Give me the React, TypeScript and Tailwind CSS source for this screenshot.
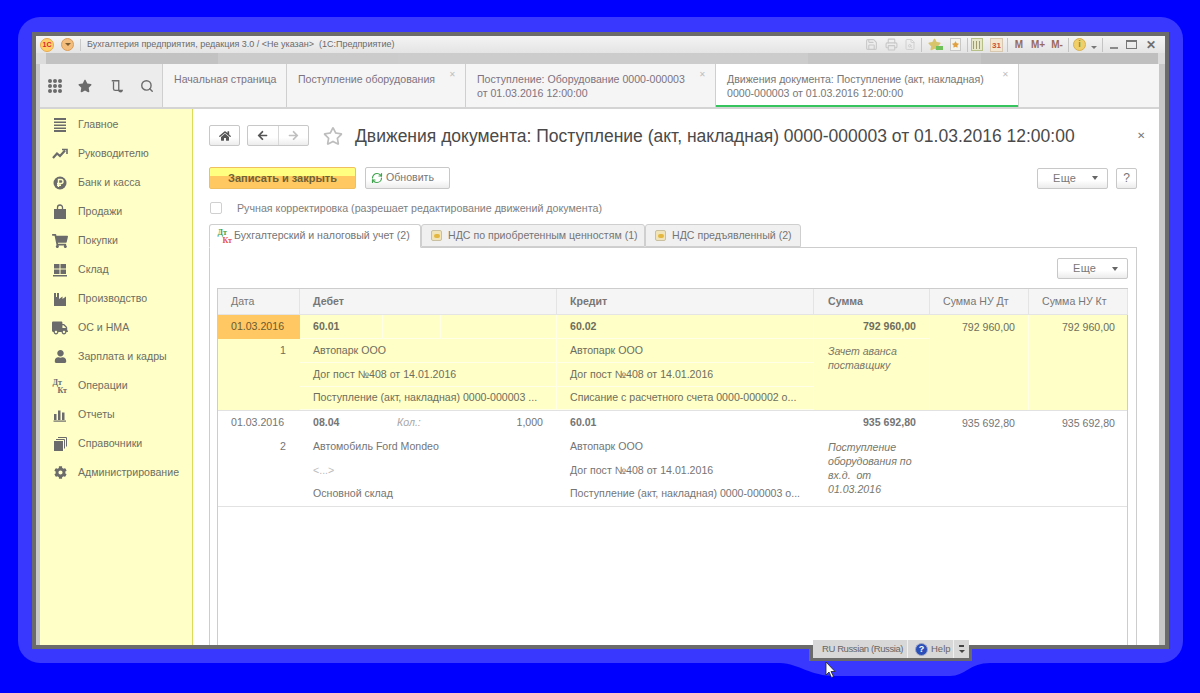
import React from "react";
import { FaShoppingCart, FaTruck, FaUser, FaCog, FaHome, FaStar, FaRegStar, FaArrowLeft, FaArrowRight } from "react-icons/fa";
import { Search, RefreshCw, Save, Printer, FileSearch } from "lucide-react";

const sideIcon = "w-4 h-4 text-[#6b6b6b]";

const IconLines = () => (
  <svg viewBox="0 0 16 16" className={sideIcon} fill="currentColor">
    <rect x="2" y="1" width="12" height="2" /><rect x="2" y="4.5" width="12" height="1.5" /><rect x="2" y="7.5" width="12" height="1.5" /><rect x="2" y="10.5" width="12" height="1.5" /><rect x="2" y="13" width="12" height="2" />
  </svg>
);
const IconTrend = () => (
  <svg viewBox="0 0 16 16" className={sideIcon} fill="none" stroke="currentColor" strokeWidth="2.2">
    <path d="M1 12 L5 7.5 L8 10 L13 4.5" /><path d="M10 3.5 H15 V8" strokeWidth="1.6" />
  </svg>
);
const IconRuble = () => (
  <svg viewBox="0 0 16 16" className={sideIcon}>
    <circle cx="8" cy="8" r="6.5" fill="currentColor" />
    <path d="M6.5 12 V4.5 H9 A2 2 0 0 1 9 8.5 H5 M5 10.3 H9" fill="none" stroke="#ffffc8" strokeWidth="1.4" />
  </svg>
);
const IconBag = () => (
  <svg viewBox="0 0 16 16" className={sideIcon} fill="currentColor">
    <path d="M2 5 H14 V15 H2 Z" />
    <path d="M5.5 6 V3.5 A2.5 2.5 0 0 1 10.5 3.5 V6" fill="none" stroke="currentColor" strokeWidth="1.3" />
  </svg>
);
const IconStock = () => (
  <svg viewBox="0 0 16 16" className={sideIcon} fill="currentColor">
    <rect x="2" y="2" width="5.5" height="4.5" /><rect x="8.5" y="2" width="5.5" height="4.5" /><rect x="2" y="7.5" width="5.5" height="4.5" /><rect x="8.5" y="7.5" width="5.5" height="4.5" /><rect x="1" y="13" width="14" height="1.5" />
  </svg>
);
const IconFactory = () => (
  <svg viewBox="0 0 16 16" className={sideIcon} fill="currentColor">
    <path d="M2 2 H4 V6 H5 V2 H7 V8 L10.5 5.5 V8 L14 5.5 V15 H2 Z" />
  </svg>
);
const IconDtKt = ({ dt = "#6b6b6b", kt = "#6b6b6b" }: { dt?: string; kt?: string }) => (
  <svg viewBox="0 0 16 16" className="w-4 h-4">
    <text x="0.5" y="7" fontSize="8" fontWeight="700" fontFamily="'Liberation Serif', serif" fill={dt}>Дт</text>
    <text x="5.5" y="15" fontSize="8" fontWeight="700" fontFamily="'Liberation Serif', serif" fill={kt}>Кт</text>
  </svg>
);
const IconBars = () => (
  <svg viewBox="0 0 16 16" className={sideIcon} fill="currentColor">
    <rect x="2" y="7" width="2.5" height="6" /><rect x="6" y="3.5" width="2.5" height="9.5" /><rect x="10" y="5.5" width="2.5" height="7.5" /><rect x="1.5" y="13.5" width="12.5" height="1.2" />
  </svg>
);
const IconBooks = () => (
  <svg viewBox="0 0 16 16" className={sideIcon} fill="currentColor">
    <rect x="2" y="5" width="9" height="10" />
    <path d="M4 3.5 H12.5 V12.5 M6 1.5 H14.5 V10.5" fill="none" stroke="currentColor" strokeWidth="1" />
  </svg>
);

const MENU: { label: string; icon: React.ReactNode }[] = [
  { label: "Главное", icon: <IconLines /> },
  { label: "Руководителю", icon: <IconTrend /> },
  { label: "Банк и касса", icon: <IconRuble /> },
  { label: "Продажи", icon: <IconBag /> },
  { label: "Покупки", icon: <FaShoppingCart className={sideIcon} /> },
  { label: "Склад", icon: <IconStock /> },
  { label: "Производство", icon: <IconFactory /> },
  { label: "ОС и НМА", icon: <FaTruck className={sideIcon} /> },
  { label: "Зарплата и кадры", icon: <FaUser className="w-[13px] h-[13px] mx-[1.5px] text-[#6b6b6b]" /> },
  { label: "Операции", icon: <IconDtKt /> },
  { label: "Отчеты", icon: <IconBars /> },
  { label: "Справочники", icon: <IconBooks /> },
  { label: "Администрирование", icon: <FaCog className="w-[13px] h-[13px] mx-[1.5px] text-[#6b6b6b]" /> },
];

const Sep = ({ className = "" }: { className?: string }) => <span className={`w-px h-[14px] bg-[#c4c4c4] ${className}`} />;

const TitleBar = () => (
  <div className="h-[17px] flex items-center bg-gradient-to-b from-[#f4f4f4] to-[#e4e4e4] pl-[4px] pr-[9px]">
    <span className="w-[14px] h-[14px] rounded-full bg-[#ffcf6a] border border-[#e8a94a] flex items-center justify-center text-[7px] leading-none font-bold text-[#d8262c]">1С</span>
    <span className="w-[13px] h-[13px] rounded-full bg-[#f2bd7d] border border-[#dc9c58] ml-[7px] flex items-center justify-center">
      <span className="w-0 h-0 border-x-[3px] border-x-transparent border-t-[3px] border-t-[#7a5a30]" />
    </span>
    <span className="w-px h-[12px] bg-[#c9c9c9] ml-[6px]" />
    <span className="ml-[6px] text-[9px] leading-none whitespace-pre text-[#6a6a6a]">Бухгалтерия предприятия, редакция 3.0 / &lt;Не указан&gt;  (1С:Предприятие)</span>
    <div className="ml-auto flex items-center text-[#9a6a5a]">
      <Save className="w-[13px] h-[13px] text-[#c8c8c8]" strokeWidth={2} />
      <Printer className="w-[13px] h-[13px] ml-[7px] text-[#c8c8c8]" strokeWidth={2} />
      <FileSearch className="w-[12px] h-[13px] ml-[6px] text-[#d0d0d0]" strokeWidth={2} />
      <Sep className="ml-[5px]" />
      <FaStar className="w-[13px] h-[13px] text-[#d8c46a] ml-[6px]" />
      <span className="w-[7px] h-[4px] bg-[#6fbf5a] -ml-[5px] mt-[6px]" />
      <span className="ml-[7px] w-[11px] h-[13px] bg-[#f4f4ec] border border-[#c8c8c8] flex items-center justify-center">
        <FaStar className="w-[7px] h-[7px] text-[#e0a040]" />
      </span>
      <Sep className="ml-[6px]" />
      <span className="w-[12px] h-[13px] bg-[#e6e6c8] border border-[#b8c08a] ml-[3px] flex flex-col items-center pt-[2px]">
        <span className="w-[8px] h-[8px] bg-[repeating-linear-gradient(90deg,#a09a70_0_1px,transparent_1px_3px)]" />
      </span>
      <span className="w-[13px] h-[14px] bg-[#f3e6d0] border border-[#d8c8b0] ml-[7px] text-[8px] leading-[13px] text-center font-bold text-[#c8503a]">31</span>
      <Sep className="ml-[4px]" />
      <span className="text-[10px] font-bold w-[10px] ml-[6px] text-center">M</span>
      <span className="text-[10px] font-bold w-[14px] ml-[7px] text-center">M+</span>
      <span className="text-[10px] font-bold w-[14px] ml-[5px] text-center">M-</span>
      <Sep className="ml-[4px]" />
      <span className="w-[13px] h-[13px] ml-[4px] rounded-full bg-[#efcf6a] border border-[#d8b050] text-[9px] leading-[11px] text-center font-bold text-[#8c8c40]">i</span>
      <span className="w-0 h-0 ml-[5px] mt-[5px] border-x-[3px] border-x-transparent border-t-[3px] border-t-[#777]" />
      <Sep className="ml-[5px]" />
      <span className="w-[8px] h-[2px] bg-[#8a8a8a] ml-[7px] mt-[6px]" />
      <span className="w-[11px] h-[9px] border border-[#777] border-t-2 ml-[8px]" />
      <span className="w-[10px] text-[12px] font-bold text-[#6e6e6e] leading-none ml-[9px]">✕</span>
    </div>
  </div>
);

const GrayStrip = () => (
  <div className="h-[11px] flex bg-[#dcdcdc]">
    <div className="w-[172px] ml-[10px] bg-[#c2c2c2]" />
    <div className="w-[180px] bg-[#cbcbcb]" />
    <div className="w-[410px] bg-[#cccccc]" />
    <div className="w-[173px] bg-[#c6c6c6]" />
    <div className="w-[177px] bg-[#bfbfbf]" />
    <div className="flex-1" />
  </div>
);

const PageTab = ({ lines, width, close, active }: { lines: string[]; width: string; close?: boolean; active?: boolean }) => (
  <div className={`relative h-full border-r border-[#cfcfcf] pt-[8px] pl-[11px] text-[10.6px] leading-[14px] ${width} ${active ? "bg-white text-[#777]" : "bg-[#f5f5f5] text-[#7d7380]"}`}>
    {lines.map((l) => (
      <div key={l} className="whitespace-nowrap">{l}</div>
    ))}
    {close && <span className="absolute right-[9px] top-[7px] text-[8px] leading-none text-[#c0c0c0]">✕</span>}
    {active && <span className="absolute left-0 right-0 bottom-0 h-[2px] bg-[#36c45e]" />}
  </div>
);

const TabsRow = () => (
  <div className="h-[45px] flex border-b-2 border-[#d4d4d4]">
    <div className="w-[123px] bg-[#ececec] border-r border-[#cfcfcf] flex items-center pl-[8px] text-[#6b6b6b]">
      <span className="grid grid-cols-[repeat(3,4px)] gap-[1px] w-[14px]">
        {Array.from({ length: 9 }).map((_, i) => (
          <span key={i} className="w-[4px] h-[4px] rounded-full bg-[#6b6b6b]" />
        ))}
      </span>
      <FaStar className="w-[14px] h-[14px] ml-[16px] mt-[1px]" />
      <svg viewBox="0 0 16 16" className="w-[14px] h-[14px] ml-[18px]" fill="none" stroke="currentColor" strokeWidth="1.5">
        <path d="M2 2 H10 V12 A2 2 0 0 0 14 13 H6 A2 2 0 0 1 4 11 V3" />
      </svg>
      <Search className="w-[14px] h-[14px] ml-[16px]" strokeWidth={2.4} />
    </div>
    <PageTab lines={["Начальная страница"]} width="w-[124px]" />
    <PageTab lines={["Поступление оборудования"]} width="w-[179px]" close />
    <PageTab lines={["Поступление: Оборудование 0000-000003", "от 01.03.2016 12:00:00"]} width="w-[250px]" close />
    <PageTab lines={["Движения документа: Поступление (акт, накладная)", "0000-000003 от 01.03.2016 12:00:00"]} width="w-[303px]" close active />
    <div className="flex-1 bg-[#f5f5f5]" />
  </div>
);

const Sidebar = () => (
  <div className="w-[153px] h-full pt-[1px] bg-[#ffffc8] border-r border-[#dcdc5a] shrink-0">
    {MENU.map((m) => (
      <div key={m.label} className="h-[29px] flex items-center pl-[12px]">
        <span className="w-[26px] flex">{m.icon}</span>
        <span className="text-[10.6px] text-[#6e6e62] whitespace-nowrap">{m.label}</span>
      </div>
    ))}
  </div>
);

const btn = "rounded-[2px] border border-[#c8c8c8] bg-gradient-to-b from-white from-60% to-[#ececec] flex items-center";

const Dropdown = ({ className = "" }: { className?: string }) => (
  <div className={`${btn} w-[71px] h-[21px] text-[11px] text-[#777] ${className}`}>
    <span className="ml-[15px] tracking-[0.3px]">Еще</span>
    <span className="ml-auto mr-[9px] w-0 h-0 border-x-[3.5px] border-x-transparent border-t-[4px] border-t-[#666]" />
  </div>
);

type Cell = { text: string; bold?: boolean };

const GRID = "grid grid-cols-[82px_257px_257px_116px_99px_99px] grid-rows-[24px_24px_24px_23px]";

const Record = ({
  date, num, debit, debitExtra, credit, sum, nuDt, nuKt, note, hl,
}: {
  date: string; num: string; debit: Cell[]; debitExtra?: boolean; credit: Cell[]; sum: string; nuDt: string; nuKt: string; note: string[]; hl?: boolean;
}) => {
  const line = hl ? "border-[#ffffe8]" : "border-transparent";
  const base = "flex items-center px-[13px] whitespace-nowrap overflow-hidden";
  const rowLine = `border-b border-r ${line}`;
  return (
    <div className={`${GRID} border-b border-[#e2e2e2] text-[10.6px] ${hl ? "bg-[#ffffc8] text-[#6e6e5c]" : "bg-white text-[#757575]"}`}>
      <div className={`${base} col-start-1 row-start-1 ${hl ? "bg-[#ffc862] text-[#6b5a30]" : ""}`}>{date}</div>
      <div className={`${base} col-start-1 row-start-2 justify-end pr-[14px]`}>{num}</div>
      <div className={`col-start-2 row-start-1 flex items-center ${rowLine}`}>
        <div className={`w-[83px] h-full pl-[13px] flex items-center font-bold border-r ${line}`}>{debit[0].text}</div>
        <div className={`w-[58px] h-full pl-[14px] flex items-center italic text-[#a8a8a8] border-r ${line}`}>{debitExtra ? "Кол.:" : ""}</div>
        <div className="flex-1 flex justify-end pr-[13px]">{debitExtra ? "1,000" : ""}</div>
      </div>
      {debit.slice(1).map((c, i) => (
        <div key={i} className={`${base} col-start-2 ${rowLine} ${c.text === "<...>" ? "text-[#bcbcbc]" : ""}`} style={{ gridRowStart: i + 2 }}>{c.text}</div>
      ))}
      {credit.map((c, i) => (
        <div key={i} className={`${base} col-start-3 ${rowLine} ${c.bold ? "font-bold" : ""}`} style={{ gridRowStart: i + 1 }}>{c.text}</div>
      ))}
      <div className={`${base} col-start-4 row-start-1 justify-end pr-[13px] font-bold ${rowLine}`}>{sum}</div>
      <div className={`col-start-4 row-start-2 row-span-3 pl-[14px] pt-[5px] italic leading-[14px] text-[#77776a] border-r ${line}`}>
        {note.map((n) => (
          <div key={n} className="whitespace-pre">{n}</div>
        ))}
      </div>
      <div className={`col-start-5 row-start-1 row-span-4 pt-[5px] pr-[13px] text-right border-r ${line}`}>{nuDt}</div>
      <div className="col-start-6 row-start-1 row-span-4 pt-[5px] pr-[13px] text-right">{nuKt}</div>
    </div>
  );
};

const HeadCell = ({ children, bold, inset = "pl-[13px]" }: { children: React.ReactNode; bold?: boolean; inset?: string }) => (
  <div className={`flex items-center border-r border-[#e4e4e4] whitespace-nowrap ${inset} ${bold ? "font-bold" : ""}`}>{children}</div>
);

const Movements = () => (
  <div className="w-[911px] ml-[7px] mt-[9px] h-[400px] border-x border-t border-[#cdcdcd]">
    <div className="grid grid-cols-[82px_257px_257px_116px_99px_99px] h-[26px] bg-[#f5f5f5] border-b border-[#e4e4e4] text-[10.6px] text-[#777] -mr-px">
      <HeadCell>Дата</HeadCell>
      <HeadCell bold>Дебет</HeadCell>
      <HeadCell bold>Кредит</HeadCell>
      <HeadCell bold inset="pl-[14px]">Сумма</HeadCell>
      <HeadCell>Сумма НУ Дт</HeadCell>
      <HeadCell>Сумма НУ Кт</HeadCell>
    </div>
    <Record
      hl
      date="01.03.2016"
      num="1"
      debit={[{ text: "60.01" }, { text: "Автопарк ООО" }, { text: "Дог пост №408 от 14.01.2016" }, { text: "Поступление (акт, накладная) 0000-000003 ..." }]}
      credit={[{ text: "60.02", bold: true }, { text: "Автопарк ООО" }, { text: "Дог пост №408 от 14.01.2016" }, { text: "Списание с расчетного счета 0000-000002 о..." }]}
      sum="792 960,00"
      nuDt="792 960,00"
      nuKt="792 960,00"
      note={["Зачет аванса", "поставщику"]}
    />
    <Record
      date="01.03.2016"
      num="2"
      debitExtra
      debit={[{ text: "08.04" }, { text: "Автомобиль Ford Mondeo" }, { text: "<...>" }, { text: "Основной склад" }]}
      credit={[{ text: "60.01", bold: true }, { text: "Автопарк ООО" }, { text: "Дог пост №408 от 14.01.2016" }, { text: "Поступление (акт, накладная) 0000-000003 о..." }]}
      sum="935 692,80"
      nuDt="935 692,80"
      nuKt="935 692,80"
      note={["Поступление", "оборудования по", "вх.д.  от", "01.03.2016"]}
    />
  </div>
);

const DocTab = ({ label, width, active, icon }: { label: string; width: string; active?: boolean; icon: React.ReactNode }) => (
  <div className={`flex items-center rounded-t-[3px] border border-[#cfcfcf] text-[10.6px] whitespace-nowrap text-[#757575] ${width} ${active ? "h-[24px] bg-white border-b-white -mb-px pl-[7px]" : "h-[23px] bg-[#f0f0f0] pl-[9px]"}`}>
    {icon}
    <span className={active ? "ml-[1px]" : "ml-[6px]"}>{label}</span>
  </div>
);

const CoinIcon = () => (
  <span className="w-[11px] h-[11px] rounded-[2px] bg-[#f0e4b8] border border-[#c8c0a0] flex items-center justify-center">
    <span className="w-[6px] h-[4px] rounded-full bg-[#e4b840]" />
  </span>
);

const Content = () => (
  <div className="flex-1 h-full bg-white overflow-hidden pl-[16px] pr-[22px]">
    <div className="h-[21px] mt-[16px] flex items-center">
      <div className={`${btn} w-[31px] h-[21px] justify-center`}>
        <FaHome className="w-[12px] h-[12px] text-[#555]" />
      </div>
      <div className={`${btn} w-[62px] h-[21px] ml-[7px]`}>
        <span className="w-[31px] h-full flex items-center justify-center border-r border-[#d8d8d8]">
          <FaArrowLeft className="w-[11px] h-[11px] text-[#555]" />
        </span>
        <span className="w-[30px] h-full flex items-center justify-center">
          <FaArrowRight className="w-[11px] h-[11px] text-[#c0c0c0]" />
        </span>
      </div>
      <FaRegStar className="w-[20px] h-[20px] ml-[14px] text-[#bdbdbd]" />
      <span className="ml-[12px] pt-[2px] text-[17.5px] text-[#4a4a4a] whitespace-nowrap">Движения документа: Поступление (акт, накладная) 0000-000003 от 01.03.2016 12:00:00</span>
      <span className="ml-auto -mr-[8px] text-[10px] text-[#777]">✕</span>
    </div>
    <div className="mt-[21px] h-[22px] flex items-center">
      <div className="w-[147px] h-[22px] rounded-[2px] border border-[#f0c060] bg-gradient-to-b from-[#ffff80] from-40% to-[#ffc860] to-40% flex items-center justify-center text-[11px] font-bold text-[#6e6236]">
        Записать и закрыть
      </div>
      <div className={`${btn} w-[85px] h-[22px] ml-[9px] pl-[5px] text-[10.6px] text-[#777]`}>
        <RefreshCw className="w-[12px] h-[12px] text-[#3fa34d]" strokeWidth={2.4} />
        <span className="ml-[3px]">Обновить</span>
      </div>
      <Dropdown className="ml-auto" />
      <div className={`${btn} w-[21px] h-[21px] ml-[8px] justify-center text-[12px] text-[#777]`}>?</div>
    </div>
    <div className="mt-[13px] h-[12px] flex items-center">
      <span className="w-[12px] h-[12px] ml-px rounded-[2px] border border-[#d0d0d0] bg-white" />
      <span className="ml-[15px] text-[10.68px] text-[#808080] whitespace-nowrap">Ручная корректировка (разрешает редактирование движений документа)</span>
    </div>
    <div className="mt-[10px] flex relative z-10">
      <DocTab active label="Бухгалтерский и налоговый учет (2)" width="w-[212px]" icon={<IconDtKt dt="#3fa34d" kt="#e8504a" />} />
      <DocTab label="НДС по приобретенным ценностям (1)" width="w-[224px]" icon={<CoinIcon />} />
      <DocTab label="НДС предъявленный (2)" width="w-[156px]" icon={<CoinIcon />} />
    </div>
    <div className="h-[420px] border border-[#cdcdcd] pt-[10px]">
      <div className="flex justify-end pr-[8px]">
        <Dropdown />
      </div>
      <Movements />
    </div>
  </div>
);

const Window = () => (
  <div className="w-[1137px] h-[617px] border-4 border-[#6b6b6b] bg-[#c8c8c8] overflow-hidden flex flex-col">
    <TitleBar />
    <div className="flex-1 min-h-0 flex flex-col pl-[4px] pr-[6px]">
      <div className="-ml-[4px] -mr-[6px]">
        <GrayStrip />
      </div>
      <TabsRow />
      <div className="flex-1 min-h-0 flex">
        <Sidebar />
        <Content />
      </div>
    </div>
  </div>
);

export default function App() {
  return (
    <div className="relative w-[1200px] h-[693px] overflow-hidden bg-[#0000ff] pt-[17px] pl-[18px] font-['Liberation_Sans',Arial,sans-serif]">
      <div className="w-[1165px] h-[646px] rounded-[22px] bg-[#3838ff] pt-[15px] pl-[14px]">
        <Window />
      </div>
      {/* halo bulge below the language bar */}
      <svg className="absolute left-[780px] top-[649px]" width="210" height="28" viewBox="0 0 210 28">
        <path d="M0 14 C20 15 30 27 55 27 H170 C185 27 190 14 210 14 V0 H0 Z" fill="#3838ff" />
      </svg>
      {/* language bar */}
      <div className="absolute left-[809px] top-[645px] w-[163px] h-[16px] bg-[#6b6b6b]" />
      <div className="absolute left-[813px] top-[640px] w-[156px] h-[18px] bg-[#d8d8d8] flex items-center text-[9.5px] text-[#666]">
        <span className="w-[95px] h-full flex items-center pl-[9px] border-r border-[#f0f0f0] whitespace-nowrap tracking-[-0.4px]">RU Russian (Russia)</span>
        <span className="w-[46px] h-full flex items-center pl-[7px] border-r border-[#f0f0f0]">
          <span className="w-[13px] h-[13px] rounded-full bg-[#2a4fb8] border border-[#a0a8c8] text-white text-[9px] leading-[11px] font-bold text-center">?</span>
          <span className="ml-[3px]">Help</span>
        </span>
        <span className="flex-1 flex flex-col items-center gap-[3px]">
          <span className="w-[5px] h-[2px] bg-[#444]" />
          <span className="w-0 h-0 border-x-[3px] border-x-transparent border-t-[3px] border-t-[#444]" />
        </span>
      </div>
      {/* mouse pointer */}
      <svg className="absolute left-[825px] top-[661px]" width="12" height="18" viewBox="0 0 12 18">
        <path d="M1 1 V14 L4 11 L6.5 16.5 L8.5 15.5 L6 10.5 H10 Z" fill="#fff" stroke="#222" strokeWidth="0.8" />
      </svg>
    </div>
  );
}
